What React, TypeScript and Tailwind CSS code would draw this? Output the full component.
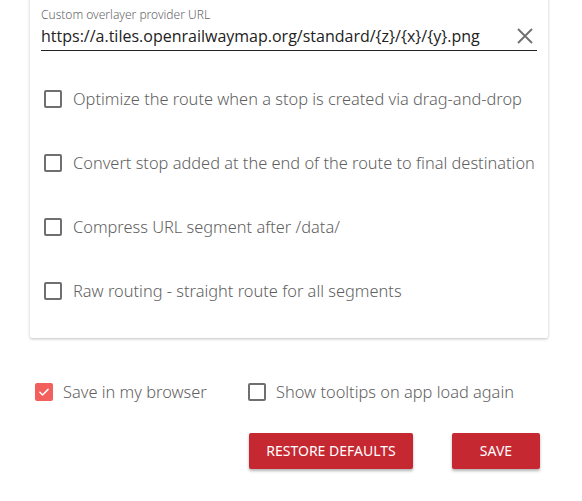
import React from "react";

function Box({ checked }: { checked?: boolean }) {
  if (checked) {
    return (
      <span className="flex h-[18px] w-[18px] shrink-0 items-center justify-center rounded-[2px] bg-[#f25f5c]">
        <svg width="14" height="14" viewBox="0 0 24 24" fill="none">
          <path d="M5 12.5l4.5 4.5L19 7.5" stroke="white" strokeWidth="2.6" strokeLinecap="round" strokeLinejoin="round" />
        </svg>
      </span>
    );
  }
  return <span className="block h-[18px] w-[18px] shrink-0 rounded-[2px] border-2 border-[#6f6f6f]" />;
}

export default function App() {
  const rows = [
    "Optimize the route when a stop is created via drag-and-drop",
    "Convert stop added at the end of the route to final destination",
    "Compress URL segment after /data/",
    "Raw routing - straight route for all segments",
  ];
  return (
    <div className="h-[501px] w-[582px] overflow-hidden bg-white" style={{ fontFamily: '"Noto Sans", sans-serif' }}>
      <div className="mx-[30px] -mt-[20px] w-[518px] rounded-b-[2px] bg-white pb-[35px] pt-[27px] shadow-[0_1px_3px_rgba(0,0,0,0.25)]">
        <div className="px-[11px]">
          <div className="text-[12px] font-light leading-[16px] text-[#666]">Custom overlayer provider URL</div>
          <div className="flex items-center border-b border-[#222] pb-[1px]">
            <span className="flex-1 text-[16px] leading-[26px] text-[#222]" style={{ fontFamily: '"Open Sans", sans-serif' }}>https://a.tiles.openrailwaymap.org/standard/&#123;z&#125;/&#123;x&#125;/&#123;y&#125;.png</span>
            <svg width="24" height="24" viewBox="0 0 24 24">
              <path d="M5 5l14 14M19 5L5 19" stroke="#707070" strokeWidth="1.9" />
            </svg>
          </div>
        </div>
        <div className="mt-[36px] flex flex-col gap-[40px] px-[14px]">
          {rows.map((r) => (
            <div key={r} className="flex h-[24px] items-center gap-[11px] whitespace-nowrap text-[16.4px] font-light text-[#5f5f5f]">
              <Box />
              <span>{r}</span>
            </div>
          ))}
        </div>
      </div>
      <div className="mt-[42px] flex items-center whitespace-nowrap px-[35px] text-[16.4px] font-light text-[#5f5f5f]">
        <div className="flex w-[213px] items-center gap-[10px]">
          <Box checked />
          <span>Save in my browser</span>
        </div>
        <div className="flex items-center gap-[10px]">
          <Box />
          <span>Show tooltips on app load again</span>
        </div>
      </div>
      <div className="mt-[28px] flex justify-end gap-[39px] pr-[42px]">
        <button className="h-[36px] w-[164px] rounded-[2px] bg-[#c62832] text-[14px] text-white shadow-[0_2px_3px_rgba(0,0,0,0.3)]">RESTORE DEFAULTS</button>
        <button className="h-[36px] w-[88px] rounded-[2px] bg-[#c62832] text-[14px] text-white shadow-[0_2px_3px_rgba(0,0,0,0.3)]">SAVE</button>
      </div>
    </div>
  );
}
